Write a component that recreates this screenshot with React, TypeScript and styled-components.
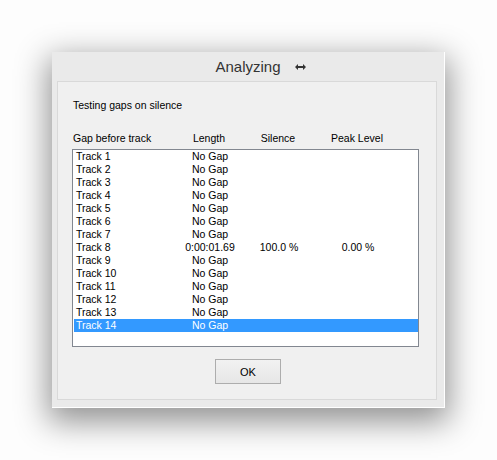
import React from 'react';
import styled, { createGlobalStyle } from 'styled-components';

interface GapRow {
  track: string;
  length: string;
  silence?: string;
  peak?: string;
}

const rows: GapRow[] = [
  { track: 'Track 1', length: 'No Gap' },
  { track: 'Track 2', length: 'No Gap' },
  { track: 'Track 3', length: 'No Gap' },
  { track: 'Track 4', length: 'No Gap' },
  { track: 'Track 5', length: 'No Gap' },
  { track: 'Track 6', length: 'No Gap' },
  { track: 'Track 7', length: 'No Gap' },
  { track: 'Track 8', length: '0:00:01.69', silence: '100.0 %', peak: '0.00 %' },
  { track: 'Track 9', length: 'No Gap' },
  { track: 'Track 10', length: 'No Gap' },
  { track: 'Track 11', length: 'No Gap' },
  { track: 'Track 12', length: 'No Gap' },
  { track: 'Track 13', length: 'No Gap' },
  { track: 'Track 14', length: 'No Gap' },
];

const GlobalStyle = createGlobalStyle`
  html, body {
    margin: 0;
    padding: 0;
    background: #fdfdfd;
  }
  body {
    font-family: "Liberation Sans", Arial, sans-serif;
  }
`;

const Page = styled.div`
  width: 497px;
  height: 460px;
  padding: 52px 0 0 52px;
  box-sizing: border-box;
  overflow: hidden;
`;

// window frame with the drop shadow of the desktop
const Dialog = styled.div`
  width: 393px;
  height: 356px;
  box-sizing: border-box;
  background: #eaeaea;
  border-right: 1px solid #ffffff;
  border-bottom: 1px solid #ffffff;
  box-shadow: 0 10px 30px 4px rgba(0, 0, 0, 0.42);
  display: flex;
  flex-direction: column;
`;

const TitleBar = styled.div`
  height: 29px;
  display: flex;
  align-items: center;
  justify-content: center;
  flex-shrink: 0;
`;

const Title = styled.span`
  position: relative;
  font-size: 15px;
  color: #333333;
  line-height: 29px;
`;

const TitleIcon = styled.svg`
  position: absolute;
  left: calc(100% + 14px);
  top: 12px;
`;

const Panel = styled.div`
  margin: 0 7px 7px 5px;
  flex: 1;
  border: 1px solid #d9d9d9;
  background: #f0f0f0;
  padding: 17px 0 15px 0;
  display: flex;
  flex-direction: column;
  font-size: 10.5px;
  line-height: 13px;
  color: #000;
`;

const Status = styled.div`
  padding-left: 15px;
  height: 13px;
`;

const Columns = styled.div`
  display: grid;
  grid-template-columns: 106px 60px 78px 80px;
  align-items: center;
`;

const HeaderRow = styled(Columns)`
  margin: 20px 0 4px 15px;
  height: 13px;
`;

const HeaderCell = styled.div<{ $left?: boolean }>`
  text-align: ${(p) => (p.$left ? 'left' : 'center')};
  white-space: nowrap;
`;

const ListBox = styled.div`
  margin-left: 14px;
  width: 347px;
  height: 198px;
  box-sizing: border-box;
  border: 1px solid #828790;
  background: #ffffff;
  padding: 0 0 0 1px;
`;

const Row = styled(Columns)<{ $selected?: boolean }>`
  height: 13px;
  background: ${(p) => (p.$selected ? '#3399ff' : 'transparent')};
  color: ${(p) => (p.$selected ? '#ffffff' : '#000000')};
`;

const Cell = styled.div<{ $left?: boolean }>`
  text-align: ${(p) => (p.$left ? 'left' : 'center')};
  padding-left: ${(p) => (p.$left ? '2px' : '0')};
  white-space: nowrap;
`;

const ButtonBar = styled.div`
  margin-top: 12px;
  display: flex;
  justify-content: center;
  padding-left: 2px;
`;

const Button = styled.button`
  width: 66px;
  height: 25px;
  box-sizing: border-box;
  border: 1px solid #adadad;
  background: linear-gradient(#f2f2f2, #e6e6e6);
  font-family: "Liberation Sans", Arial, sans-serif;
  font-size: 11px;
  color: #000;
  padding: 0;
`;

const ResizeArrow = () => (
  <TitleIcon width="11" height="6" viewBox="0 0 11 6">
    <path d="M0 3 L3 0 L3 2 L8 2 L8 0 L11 3 L8 6 L8 4 L3 4 L3 6 Z" fill="#333333" />
  </TitleIcon>
);

export default function App() {
  return (
    <Page>
      <GlobalStyle />
      <Dialog>
        <TitleBar>
          <Title>
            Analyzing
            <ResizeArrow />
          </Title>
        </TitleBar>
        <Panel>
          <Status>Testing gaps on silence</Status>
          <HeaderRow>
            <HeaderCell $left>Gap before track</HeaderCell>
            <HeaderCell>Length</HeaderCell>
            <HeaderCell>Silence</HeaderCell>
            <HeaderCell>Peak Level</HeaderCell>
          </HeaderRow>
          <ListBox>
            {rows.map((r, i) => (
              <Row key={r.track} $selected={i === rows.length - 1}>
                <Cell $left>{r.track}</Cell>
                <Cell>{r.length}</Cell>
                <Cell>{r.silence ?? ''}</Cell>
                <Cell>{r.peak ?? ''}</Cell>
              </Row>
            ))}
          </ListBox>
          <ButtonBar>
            <Button>OK</Button>
          </ButtonBar>
        </Panel>
      </Dialog>
    </Page>
  );
}
